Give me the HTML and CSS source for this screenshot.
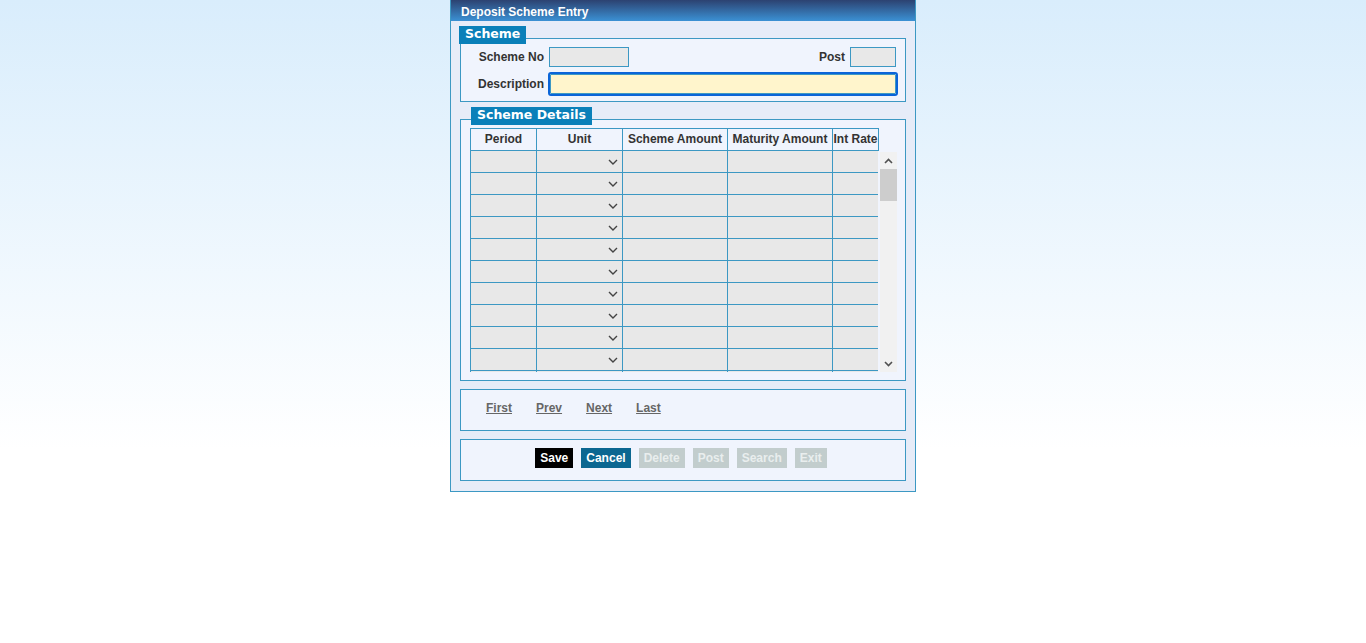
FILE: index.html
```html
<!DOCTYPE html>
<html lang="en">
<head>
  <meta charset="UTF-8">
  <title>Deposit Scheme Entry</title>
  <link rel="stylesheet" href="styles.css">
</head>
<body>
  <div class="window">
    <div class="title">Deposit Scheme Entry</div>
    <div class="content">

      <div class="legend">Scheme</div>
      <div class="box scheme-box">
        <label class="lbl" for="schemeNo">Scheme No</label>
        <div class="row">
          <input type="text" id="schemeNo" class="txt txt-no" readonly>
          <label class="lbl lbl-post" for="post">Post</label>
          <input type="text" id="post" class="txt txt-post" readonly>
        </div>
        <label class="lbl" for="description">Description</label>
        <input type="text" id="description" class="txt txt-desc" autofocus>
      </div>

      <div class="legend legend-details">Scheme Details</div>
      <div class="box details-box">
        <table class="grid grid-head">
          <colgroup>
            <col class="c1"><col class="c2"><col class="c3"><col class="c4"><col class="c5">
          </colgroup>
          <tr>
            <th>Period</th>
            <th>Unit</th>
            <th>Scheme Amount</th>
            <th>Maturity Amount</th>
            <th>Int Rate</th>
          </tr>
        </table>
        <div class="grid-wrap">
          <div class="grid-scroll">
            <table class="grid grid-body">
              <colgroup>
                <col class="c1"><col class="c2"><col class="c3"><col class="c4"><col class="c5">
              </colgroup>
              <tbody id="rows"></tbody>
            </table>
          </div>
          <div class="vbar">
            <div class="vbar-btn">
              <svg width="9" height="6" viewBox="0 0 9 6"><polyline points="1,5 4.5,1.5 8,5" fill="none" stroke="#505050" stroke-width="1.6"/></svg>
            </div>
            <div class="vbar-track"><div class="vbar-thumb"></div></div>
            <div class="vbar-btn">
              <svg width="9" height="6" viewBox="0 0 9 6"><polyline points="1,1 4.5,4.5 8,1" fill="none" stroke="#505050" stroke-width="1.6"/></svg>
            </div>
          </div>
        </div>
      </div>

      <div class="box nav-box">
        <a href="#">First</a>
        <a href="#">Prev</a>
        <a href="#">Next</a>
        <a href="#">Last</a>
      </div>

      <div class="box btn-box">
        <button class="btn btn-save">Save</button>
        <button class="btn btn-cancel">Cancel</button>
        <button class="btn btn-off" disabled>Delete</button>
        <button class="btn btn-off" disabled>Post</button>
        <button class="btn btn-off" disabled>Search</button>
        <button class="btn btn-off" disabled>Exit</button>
      </div>

    </div>
  </div>

  <script>
    const rows = document.getElementById("rows");
    const chevron = "<svg class='drop' width='10' height='6' viewBox='0 0 10 6'>" +
      "<polyline points='1,1 5,5 9,1' fill='none' stroke='#444' stroke-width='1.4'/></svg>";
    let html = "";
    for (let i = 0; i < 60; i++) {
      html += "<tr>" +
        "<td><input type='text' class='cell'></td>" +
        "<td class='sel'><select class='unit'><option></option><option>Days</option><option>Months</option><option>Years</option></select>" + chevron + "</td>" +
        "<td><input type='text' class='cell'></td>" +
        "<td><input type='text' class='cell'></td>" +
        "<td><input type='text' class='cell'></td>" +
        "</tr>";
    }
    rows.innerHTML = html;
  </script>
</body>
</html>
```

FILE: styles.css
```css
html {
  background: #fff;
}

body {
  margin: 0;
  min-height: 643px;
  font-family: "Liberation Sans", Arial, sans-serif;
  font-size: 12px;
  color: #333;
  background: linear-gradient(to bottom, #d9edfc 0, #ffffff 450px) no-repeat;
}

.window {
  width: 464px;
  margin: 0 auto;
  border: 1px solid #3c98c3;
  border-top: 0;
  background-color: #e6ecf8;
}

.title {
  height: 21px;
  line-height: 24px;
  padding-left: 10px;
  font-weight: bold;
  color: #fff;
  background: linear-gradient(to bottom, #2c4271, #3b91d4);
}

.content {
  padding: 5px 9px 10px;
}

.legend {
  position: relative;
  z-index: 1;
  width: fit-content;
  height: 18px;
  line-height: 16px;
  padding: 0 6px;
  margin-left: -1px;
  margin-bottom: -6px;
  font-family: "DejaVu Sans", Verdana, sans-serif;
  font-size: 12.5px;
  font-weight: bold;
  color: #fff;
  background-color: #0a80b9;
}

.legend-details {
  margin-top: 5px;
  margin-left: 11px;
}

.box {
  border: 1px solid #3c98c3;
  background-color: #f0f4fd;
}

/* scheme header */
.scheme-box {
  display: grid;
  grid-template-columns: 73px 1fr;
  column-gap: 5px;
  row-gap: 7px;
  align-items: center;
  padding: 8px 11px 7px 10px;
}

.lbl {
  font-weight: bold;
  text-align: right;
  color: #333;
}

.row {
  display: flex;
  align-items: center;
}

.lbl-post {
  margin-left: auto;
  margin-right: 5px;
}

.txt {
  box-sizing: border-box;
  height: 20px;
  border: 1px solid #3c98c3;
  background-color: #e8e8e8;
  padding: 0 3px;
  font-family: "Liberation Sans", Arial, sans-serif;
  font-size: 12px;
  border-radius: 0;
}

.txt-no {
  width: 80px;
}

.txt-post {
  width: 46px;
}

.txt-desc {
  width: 346px;
  margin-left: 1px;
  background-color: #fff5cc;
  outline: 2px solid #0a64d8;
  outline-offset: 0;
  border-radius: 1px;
}

/* details grid */
.details-box {
  padding: 8px 8px 8px 9px;
}

.grid {
  border-collapse: collapse;
  table-layout: fixed;
  width: 408px;
}

.grid col.c1 { width: 66px; }
.grid col.c2 { width: 86px; }
.grid col.c3 { width: 105px; }
.grid col.c4 { width: 105px; }
.grid col.c5 { width: 46px; }

.grid th,
.grid td {
  border: 1px solid #3c98c3;
  padding: 0;
}

.grid th {
  height: 21px;
  line-height: 20px;
  vertical-align: top;
  font-weight: bold;
  color: #333;
  background-color: #f0f4fd;
  white-space: nowrap;
  overflow: hidden;
}

.grid-body {
  margin-top: -1px;
}

.grid td {
  height: 21px;
  background-color: #e8e8e8;
}

.grid-wrap {
  display: flex;
}

.grid-scroll {
  width: 409px;
  height: 221px;
  overflow-y: scroll;
  overflow-x: hidden;
  scrollbar-width: none;
}

.grid-scroll::-webkit-scrollbar {
  display: none;
}

.vbar {
  width: 17px;
  height: 220px;
  margin-left: 2px;
  margin-top: 1px;
  display: flex;
  flex-direction: column;
  background-color: #f1f1f1;
}

.vbar-btn {
  height: 17px;
  display: flex;
  align-items: center;
  justify-content: center;
}

.vbar-track {
  flex: 1;
}

.vbar-thumb {
  height: 32px;
  background-color: #cdcdcd;
}

.cell {
  display: block;
  width: 100%;
  height: 21px;
  box-sizing: border-box;
  border: 0;
  background: transparent;
  outline: none;
}

.sel {
  position: relative;
}

.unit {
  display: block;
  width: 100%;
  height: 21px;
  border: 0;
  background: transparent;
  appearance: none;
  font-family: "Liberation Sans", Arial, sans-serif;
  font-size: 12px;
  color: #333;
  outline: none;
}

.drop {
  position: absolute;
  right: 4px;
  top: 8px;
  pointer-events: none;
}

/* paging */
.nav-box {
  margin-top: 8px;
  height: 35px;
  display: flex;
  align-items: center;
  padding-left: 25px;
  padding-bottom: 5px;
}

.nav-box a {
  margin-right: 24px;
  font-weight: bold;
  color: #666;
}

/* actions */
.btn-box {
  margin-top: 8px;
  height: 40px;
  display: flex;
  justify-content: center;
  align-items: flex-start;
  gap: 8px;
  padding-right: 4px;
}

.btn {
  height: 20px;
  margin-top: 8px;
  padding: 0 5px;
  border: 0;
  border-radius: 0;
  font-family: "Liberation Sans", Arial, sans-serif;
  font-size: 12px;
  font-weight: bold;
  color: #fff;
  cursor: pointer;
}

.btn-save {
  background-color: #000;
}

.btn-cancel {
  background-color: #0b6791;
}

.btn-off {
  background-color: #c2cdcd;
  color: #e9eeee;
  cursor: default;
}
```
